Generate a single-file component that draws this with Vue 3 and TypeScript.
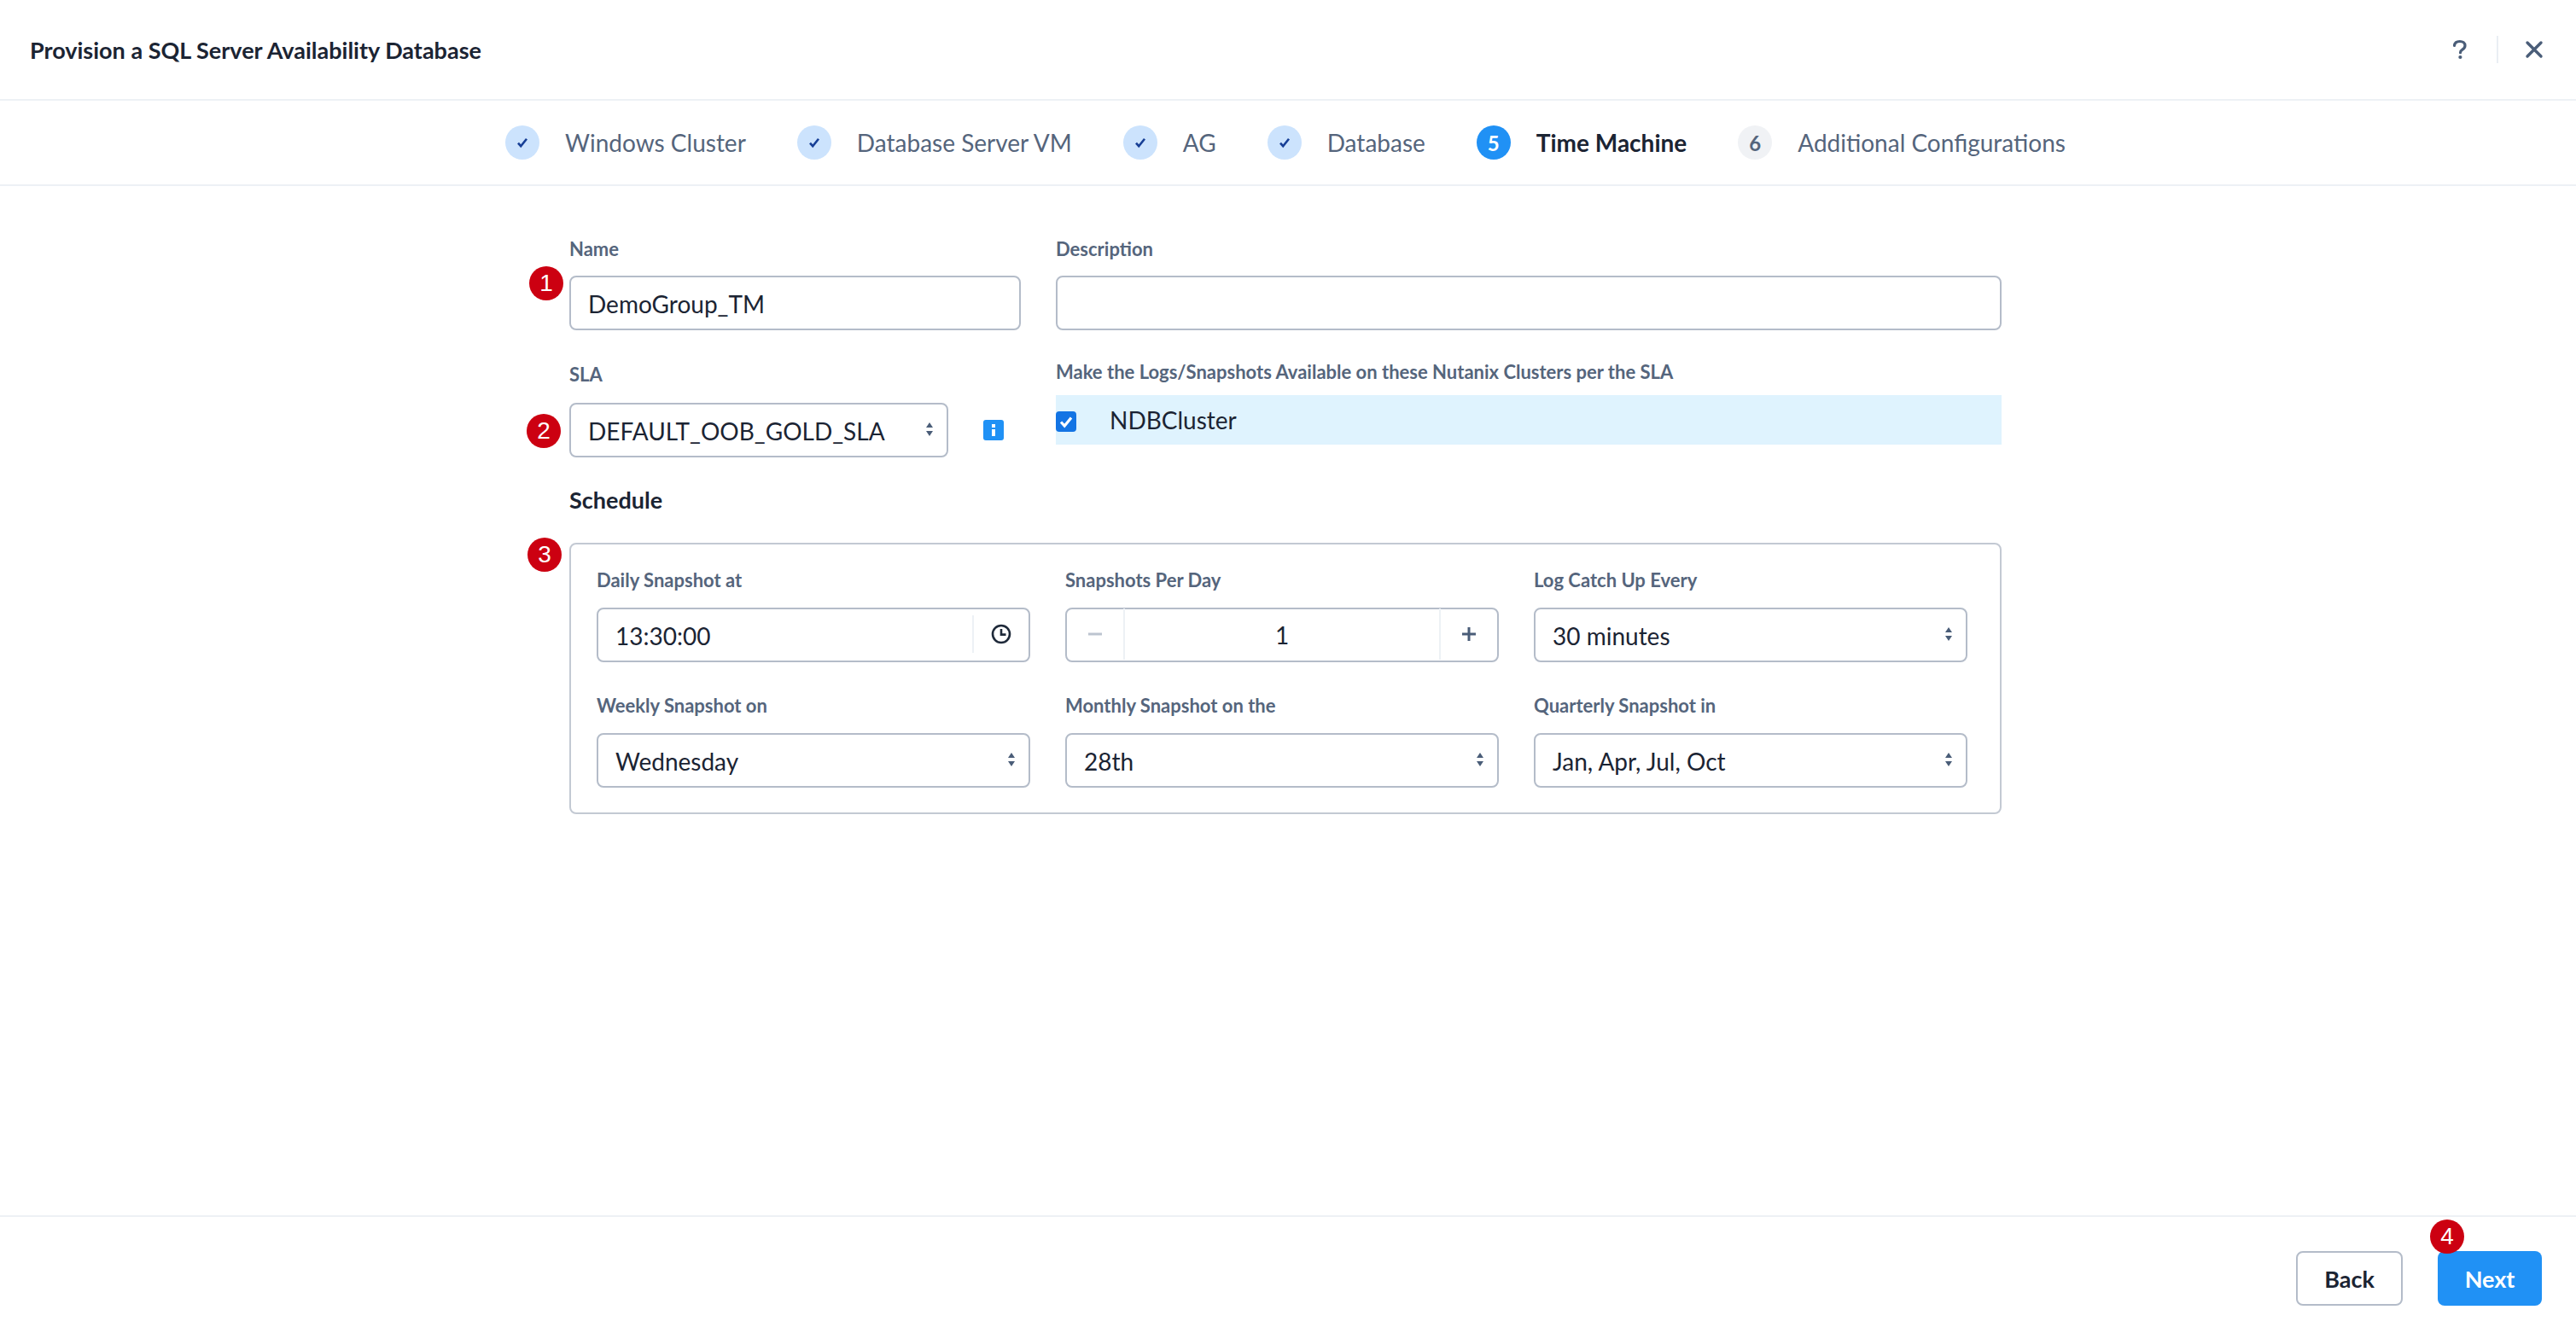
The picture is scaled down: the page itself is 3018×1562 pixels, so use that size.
<template>
  <div class="page">
    <header class="top-bar">
      <h1 class="title">Provision a SQL Server Availability Database</h1>
      <div class="top-actions">
        <svg class="help-icon" viewBox="0 0 18 24" width="18" height="24">
          <path d="M2.5 7.5C2.8 4.2 5.4 2.5 8.8 2.5c3.6 0 6.2 2 6.2 5 0 2.3-1.4 3.5-3.1 4.6-1.6 1-2.4 1.8-2.4 3.6" fill="none" stroke="#4a5d78" stroke-width="3.2" stroke-linecap="round" />
          <circle cx="9.4" cy="21" r="2.1" fill="#4a5d78" />
        </svg>
        <span class="action-divider"></span>
        <svg class="close-icon" viewBox="0 0 22 22" width="22" height="22">
          <path d="M3 3l16 16M19 3L3 19" fill="none" stroke="#4a5d78" stroke-width="3.4" stroke-linecap="round" />
        </svg>
      </div>
    </header>

    <nav class="steps">
      <div v-for="step in steps" :key="step.label" class="step" :class="step.state">
        <span class="step-dot">
          <svg v-if="step.state === 'done'" viewBox="0 0 14 14" width="14" height="14">
            <path d="M2 7.6l3.2 3.6L12 2.8" fill="none" stroke="#173f96" stroke-width="2.6" />
          </svg>
          <template v-else>{{ step.num }}</template>
        </span>
        <span class="step-label">{{ step.label }}</span>
      </div>
    </nav>

    <main class="content">
      <div class="form">
        <span class="badge badge-1">1</span>
        <span class="badge badge-2">2</span>
        <span class="badge badge-3">3</span>

        <div class="form-grid">
          <div class="field">
            <label class="label">Name</label>
            <div class="control">DemoGroup_TM</div>
          </div>
          <div class="field">
            <label class="label">Description</label>
            <div class="control"></div>
          </div>

          <div class="field sla-field">
            <label class="label">SLA</label>
            <div class="sla-row">
              <div class="control select sla-select">
                DEFAULT_OOB_GOLD_SLA
                <svg class="arrows" viewBox="0 0 10 18" width="10" height="18">
                  <path d="M5 1l4 6H1zM5 17l4-6H1z" fill="#4a5d78" />
                </svg>
              </div>
              <svg class="info-icon" viewBox="0 0 24 24" width="24" height="24">
                <rect width="24" height="24" rx="3" fill="#2091f5" />
                <rect x="10" y="5" width="4" height="4" fill="#fff" />
                <rect x="10" y="11" width="4" height="8" fill="#fff" />
              </svg>
            </div>
          </div>
          <div class="field clusters-field">
            <label class="label">Make the Logs/Snapshots Available on these Nutanix Clusters per the SLA</label>
            <div class="cluster-row">
              <svg class="checkbox" viewBox="0 0 24 24" width="24" height="24">
                <rect width="24" height="24" rx="4" fill="#1374e4" />
                <path d="M6 12.5l4.2 4.5L18 7.5" fill="none" stroke="#fff" stroke-width="3.2" />
              </svg>
              <span class="cluster-name">NDBCluster</span>
            </div>
          </div>
        </div>

        <h2 class="schedule-title">Schedule</h2>

        <div class="schedule-box">
          <div class="field">
            <label class="label">Daily Snapshot at</label>
            <div class="control with-addon">
              <span class="addon-value">13:30:00</span>
              <span class="addon">
                <svg viewBox="0 0 24 24" width="24" height="24">
                  <circle cx="12" cy="12" r="10" fill="none" stroke="#1f2a3a" stroke-width="2.6" />
                  <path d="M12 6v6.6h5.5" fill="none" stroke="#1f2a3a" stroke-width="2.6" />
                </svg>
              </span>
            </div>
          </div>
          <div class="field">
            <label class="label">Snapshots Per Day</label>
            <div class="control stepper">
              <span class="step-btn minus">
                <svg viewBox="0 0 16 16" width="16" height="16"><path d="M0 8h16" stroke="#bcc4d0" stroke-width="3" /></svg>
              </span>
              <span class="stepper-value">1</span>
              <span class="step-btn plus">
                <svg viewBox="0 0 16 16" width="16" height="16"><path d="M0 8h16M8 0v16" stroke="#4a5d78" stroke-width="3" /></svg>
              </span>
            </div>
          </div>
          <div v-for="item in selects" :key="item.label" class="field">
            <label class="label">{{ item.label }}</label>
            <div class="control select">
              {{ item.value }}
              <svg class="arrows" viewBox="0 0 10 18" width="10" height="18">
                <path d="M5 1l4 6H1zM5 17l4-6H1z" fill="#4a5d78" />
              </svg>
            </div>
          </div>
        </div>
      </div>
    </main>

    <footer class="footer">
      <button class="btn btn-back">Back</button>
      <div class="next-wrap">
        <span class="badge badge-4">4</span>
        <button class="btn btn-next">Next</button>
      </div>
    </footer>
  </div>
</template>

<script setup lang="ts">
interface Step {
  label: string
  num: number
  state: 'done' | 'active' | 'todo'
}

const steps: Step[] = [
  { label: 'Windows Cluster', num: 1, state: 'done' },
  { label: 'Database Server VM', num: 2, state: 'done' },
  { label: 'AG', num: 3, state: 'done' },
  { label: 'Database', num: 4, state: 'done' },
  { label: 'Time Machine', num: 5, state: 'active' },
  { label: 'Additional Configurations', num: 6, state: 'todo' }
]

// the third field of row one and all of row two share the same select markup
const selects = [
  { label: 'Log Catch Up Every', value: '30 minutes' },
  { label: 'Weekly Snapshot on', value: 'Wednesday' },
  { label: 'Monthly Snapshot on the', value: '28th' },
  { label: 'Quarterly Snapshot in', value: 'Jan, Apr, Jul, Oct' }
]
</script>

<style>
html, body {
  margin: 0;
  background: #fff;
}
</style>

<style scoped>
.page {
  height: 1562px;
  display: flex;
  flex-direction: column;
  font-family: Lato, "Open Sans", sans-serif;
  color: #1f2a3a;
  overflow: hidden;
}

.top-bar {
  height: 116px;
  flex: none;
  display: flex;
  align-items: center;
  justify-content: space-between;
  padding: 0 38px 0 35px;
  border-bottom: 2px solid #edf1f5;
}

.title {
  margin: 0;
  font-size: 27px;
  font-weight: 700;
  color: #1b2433;
}

.top-actions {
  display: flex;
  align-items: center;
}

.action-divider {
  width: 2px;
  height: 32px;
  background: #eaeef3;
  margin: 0 31px 0 34px;
}

.steps {
  height: 98px;
  flex: none;
  display: flex;
  align-items: center;
  justify-content: center;
  gap: 60px;
  padding-right: 6px;
  border-bottom: 2px solid #edf1f5;
}

.step {
  display: flex;
  align-items: center;
  gap: 30px;
  font-size: 28px;
  color: #55657c;
}

.step-dot {
  width: 40px;
  height: 40px;
  border-radius: 50%;
  display: flex;
  align-items: center;
  justify-content: center;
  font-size: 24px;
  font-weight: 700;
}

.done .step-dot {
  background: #cce3fd;
}

.active .step-dot {
  background: #2091f5;
  color: #fff;
}

.active .step-label {
  color: #1b2433;
  font-weight: 700;
}

.todo .step-dot {
  background: #f0f2f5;
  color: #55657c;
}

.content {
  flex: 1;
}

.form {
  position: relative;
  width: 1678px;
  margin-left: 667px;
  padding-top: 60px;
}

.form-grid {
  display: grid;
  grid-template-columns: 529px 1108px;
  column-gap: 41px;
  row-gap: 38px;
}

.field {
  display: flex;
  flex-direction: column;
  min-width: 0;
}

.label {
  font-size: 22px;
  line-height: 28px;
  font-weight: 700;
  color: #55657c;
  margin-bottom: 17px;
}

.control {
  position: relative;
  box-sizing: border-box;
  height: 64px;
  display: flex;
  align-items: center;
  padding: 2px 20px 0;
  border: 2px solid #b4bcc9;
  border-radius: 8px;
  background: #fff;
  font-size: 28px;
  color: #1b2433;
}

.sla-field .label {
  margin-bottom: 19px;
}

.sla-row {
  display: flex;
  align-items: center;
  gap: 41px;
}

.sla-select {
  width: 444px;
}

.arrows {
  position: absolute;
  right: 15px;
  top: 20px;
}

.clusters-field {
  margin-top: -3px;
}

.clusters-field .label {
  margin-bottom: 13px;
}

.cluster-row {
  height: 58px;
  display: flex;
  align-items: center;
  gap: 39px;
  background: #dff3fe;
  font-size: 28px;
  color: #1b2433;
}

.checkbox {
  margin-top: 3px;
}

.schedule-title {
  margin: 35px 0;
  font-size: 27px;
  line-height: 30px;
  font-weight: 700;
  color: #1b2433;
}

.schedule-box {
  box-sizing: border-box;
  display: grid;
  grid-template-columns: repeat(3, 508px);
  column-gap: 41px;
  row-gap: 37px;
  padding: 28px 37px 29px 30px;
  border: 2px solid #c3c9d3;
  border-radius: 8px;
}

.schedule-box .label {
  margin-bottom: 18px;
}

.with-addon {
  justify-content: space-between;
  padding-right: 0;
}

.addon {
  width: 64px;
  height: 44px;
  margin-top: -4px;
  display: flex;
  align-items: center;
  justify-content: center;
  border-left: 2px solid #edf1f5;
}

.stepper {
  padding: 0;
}

.stepper-value {
  flex: 1;
  text-align: center;
}

.step-btn {
  width: 66px;
  height: 60px;
  margin-top: -2px;
  display: flex;
  align-items: center;
  justify-content: center;
}

.minus {
  border-right: 2px solid #edf1f5;
}

.plus {
  border-left: 2px solid #edf1f5;
}

.footer {
  height: 138px;
  flex: none;
  box-sizing: border-box;
  display: flex;
  justify-content: flex-end;
  gap: 41px;
  padding: 40px 40px 0 0;
  border-top: 2px solid #edf1f5;
}

.next-wrap {
  position: relative;
}

.btn {
  height: 64px;
  box-sizing: border-box;
  border-radius: 8px;
  font-family: inherit;
  font-size: 27px;
  font-weight: 700;
}

.btn-back {
  width: 125px;
  background: #fff;
  border: 2px solid #b4bcc9;
  color: #1b2433;
}

.btn-next {
  width: 122px;
  background: #2091f5;
  border: none;
  color: #fff;
}

.badge {
  position: absolute;
  width: 40px;
  height: 40px;
  border-radius: 50%;
  background: #cc0011;
  color: #fff;
  display: flex;
  align-items: center;
  justify-content: center;
  font-family: "Liberation Sans", sans-serif;
  font-size: 28px;
}

.badge-1 {
  left: -47px;
  top: 94px;
}

.badge-2 {
  left: -50px;
  top: 267px;
}

.badge-3 {
  left: -49px;
  top: 412px;
}

.badge-4 {
  left: -9px;
  top: -37px;
}
</style>
